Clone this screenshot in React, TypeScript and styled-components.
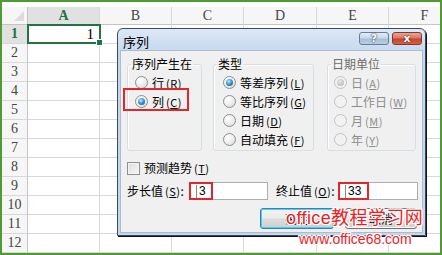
import styled, { createGlobalStyle, css } from 'styled-components';

const GlobalStyle = createGlobalStyle`
  html, body {
    margin: 0;
    padding: 0;
    background: #fff;
  }
  body {
    font-family: "Noto Sans CJK SC", "Noto Sans", sans-serif;
  }
`;

const columns = ['A', 'B', 'C', 'D', 'E', 'F'];
const rows = Array.from({ length: 12 }, (_, i) => i + 1);

const seriesIn = [
  { text: '行', key: 'R', checked: false },
  { text: '列', key: 'C', checked: true, marked: true },
];

const seriesType = [
  { text: '等差序列', key: 'L', checked: true },
  { text: '等比序列', key: 'G', checked: false },
  { text: '日期', key: 'D', checked: false },
  { text: '自动填充', key: 'F', checked: false },
];

const dateUnit = [
  { text: '日', key: 'A', checked: true },
  { text: '工作日', key: 'W', checked: false },
  { text: '月', key: 'M', checked: false },
  { text: '年', key: 'Y', checked: false },
];

type Option = { text: string; key: string; checked: boolean; marked?: boolean };

function Key({ k }: { k: string }) {
  return (
    <HotKey>
      (<u>{k}</u>)
    </HotKey>
  );
}

function OptionGroup({
  title,
  options,
  width,
  inset,
  disabled,
}: {
  title: string;
  options: Option[];
  width: number;
  inset: number;
  disabled?: boolean;
}) {
  return (
    <Group $width={width}>
      <Legend $disabled={disabled}>{title}</Legend>
      <Options $inset={inset}>
        {options.map((o) => (
          <RadioRow key={o.key} $disabled={disabled}>
            <Radio $checked={o.checked} $disabled={disabled} />
            <span>
              {o.text}
              <Key k={o.key} />
            </span>
            {o.marked && <RowMark />}
          </RadioRow>
        ))}
      </Options>
    </Group>
  );
}

function App() {
  return (
    <>
      <GlobalStyle />
      <Frame>
        <Sheet>
          <Corner>
            <Triangle />
          </Corner>
          {columns.map((c) => (
            <ColHead key={c} $selected={c === 'A'}>
              {c}
            </ColHead>
          ))}
          {rows.map((r) => (
            <Row key={r} r={r} />
          ))}
        </Sheet>

        <Dialog>
          <TitleBar>
            <Title>序列</Title>
            <TitleButtons>
              <HelpButton>?</HelpButton>
              <CloseButton>x</CloseButton>
            </TitleButtons>
          </TitleBar>
          <Body>
            <Groups>
              <OptionGroup title="序列产生在" options={seriesIn} width={75} inset={7} />
              <OptionGroup title="类型" options={seriesType} width={101} inset={9} />
              <OptionGroup title="日期单位" options={dateUnit} width={89} inset={6} disabled />
            </Groups>
            <CheckRow>
              <CheckBox />
              <span>
                预测趋势
                <Key k="T" />
              </span>
            </CheckRow>
            <FieldRow>
              <Field>
                <FieldLabel>
                  步长值
                  <Key k="S" />:
                </FieldLabel>
                <TextBox $width={79}>
                  <Caret />3<InputMark $width={24} />
                </TextBox>
              </Field>
              <Field>
                <FieldLabel>
                  终止值
                  <Key k="O" />:
                </FieldLabel>
                <TextBox $width={80}>
                  <Caret />
                  33
                  <InputMark $width={31} />
                </TextBox>
              </Field>
            </FieldRow>
            <ButtonRow>
              <Button $width={74} $primary>
                确定
              </Button>
              <Button $width={72}>取消</Button>
            </ButtonRow>
          </Body>
        </Dialog>

        <Watermark>
          <WatermarkTitle>office教程学习网</WatermarkTitle>
          <WatermarkUrl>www.office68.com</WatermarkUrl>
        </Watermark>
      </Frame>
    </>
  );
}

function Row({ r }: { r: number }) {
  return (
    <>
      <RowHead $selected={r === 1}>{r}</RowHead>
      {columns.map((c) =>
        r === 1 && c === 'A' ? (
          <ActiveCell key={c}>
            1
            <Selection>
              <FillHandle />
            </Selection>
          </ActiveCell>
        ) : (
          <Cell key={c} />
        )
      )}
    </>
  );
}

export default App;

const Frame = styled.div`
  position: relative;
  width: 442px;
  height: 255px;
  box-sizing: border-box;
  border: 2px solid #509a36;
  overflow: hidden;
  background: #fff;
`;

const Sheet = styled.div`
  display: grid;
  grid-template-columns: 26px 72px 72px 72px 73px 72px 72px;
  grid-template-rows: 18px repeat(12, 19px);
  margin-top: 5px;
  font-family: "Liberation Serif", "DejaVu Serif", serif;
  color: #444;
`;

const cellBase = css`
  box-sizing: border-box;
  border-right: 1px solid #d8d8d8;
  border-bottom: 1px solid #d8d8d8;
`;

const Corner = styled.div`
  ${cellBase}
  background: #f6f6f6;
  border-right-color: #c4c4c4;
  border-bottom-color: #c4c4c4;
  display: flex;
  align-items: flex-end;
  justify-content: flex-end;
  padding: 0 3px 3px 0;
`;

const Triangle = styled.span`
  width: 0;
  height: 0;
  border-left: 10px solid transparent;
  border-bottom: 10px solid #dcdcdc;
`;

const headBase = css<{ $selected?: boolean }>`
  ${cellBase}
  background: ${(p) => (p.$selected ? '#e1e1e1' : '#f6f6f6')};
  color: ${(p) => (p.$selected ? '#217346' : '#444')};
  font-weight: ${(p) => (p.$selected ? 700 : 400)};
  font-size: 14px;
  display: flex;
  align-items: center;
  justify-content: center;
`;

const ColHead = styled.div<{ $selected?: boolean }>`
  ${headBase}
  border-bottom-color: #c4c4c4;
`;

const RowHead = styled.div<{ $selected?: boolean }>`
  ${headBase}
  border-right-color: #c4c4c4;
`;

const Cell = styled.div`
  ${cellBase}
  background: #fff;
`;

const ActiveCell = styled.div`
  ${cellBase}
  position: relative;
  display: flex;
  align-items: center;
  justify-content: flex-end;
  padding-right: 5px;
  font-size: 15px;
  color: #000;
`;

const Selection = styled.div`
  position: absolute;
  left: -1px;
  top: -1px;
  right: -2px;
  bottom: -1px;
  border: 2px solid #217346;
`;

const FillHandle = styled.span`
  position: absolute;
  right: -4px;
  bottom: -4px;
  width: 5px;
  height: 5px;
  background: #217346;
  border: 1px solid #fff;
`;

const Dialog = styled.div`
  position: absolute;
  left: 115px;
  top: 26px;
  width: 309px;
  height: 208px;
  box-sizing: border-box;
  display: flex;
  flex-direction: column;
  border: 1px solid #3b4a5e;
  border-radius: 6px 6px 0 0;
  padding: 0 2px 2px;
  background: linear-gradient(#dce8f6, #c4d7ed 25px, #c4d7ed);
  box-shadow: 1px 1px 0 #111;
  font-family: "Noto Sans CJK SC", "Noto Sans", sans-serif;
  font-size: 12px;
  color: #000;
`;

const TitleBar = styled.div`
  height: 21px;
  flex-shrink: 0;
  display: flex;
  justify-content: space-between;
  padding: 0 1px 0 3px;
`;

const Title = styled.span`
  font-size: 13px;
  line-height: 16px;
  margin-top: 5px;
`;

const TitleButtons = styled.div`
  display: flex;
  gap: 3px;
  margin-top: 3px;
`;

const captionButton = css`
  width: 30px;
  height: 13px;
  box-sizing: border-box;
  border-radius: 3px;
  display: flex;
  align-items: center;
  justify-content: center;
  font-family: "DejaVu Sans", "Liberation Sans", sans-serif;
  font-weight: 700;
  color: #fff;
`;

const HelpButton = styled.span`
  ${captionButton}
  border: 1px solid #6a7d96;
  background: linear-gradient(#e3ecf6 0%, #c8d7e8 48%, #a9bfd8 52%, #b9cde2 100%);
  font-size: 11px;
  text-shadow: 0 0 2px #33445a, 0 0 1px #33445a;
`;

const CloseButton = styled.span`
  ${captionButton}
  border: 1px solid #8a3529;
  background: linear-gradient(#eaa497 0%, #d97766 48%, #c43f2c 52%, #d4624c 100%);
  font-size: 11px;
  line-height: 11px;
  text-shadow: 0 0 2px #5b1a10, 0 0 1px #5b1a10;
`;

const Body = styled.div`
  flex: 1;
  display: flex;
  flex-direction: column;
  background: #f0f0f0;
  border: 1px solid #a9bbd1;
  padding: 6px 3px 0 6px;
`;

const Groups = styled.div`
  display: flex;
  gap: 11px;
  & > :last-child {
    margin-left: 2px;
  }
`;

const Group = styled.fieldset<{ $width: number }>`
  margin: 0;
  width: ${(p) => p.$width}px;
  box-sizing: border-box;
  min-width: 0;
  height: 94px;
  padding: 2px 0 0 0;
  border: 1px solid #d5dfe5;
  border-radius: 3px;
  box-shadow: inset 1px 1px 0 #fff;
`;

const Legend = styled.legend<{ $disabled?: boolean }>`
  padding: 0 1px;
  margin-left: 3px;
  line-height: 14px;
  white-space: nowrap;
  color: ${(p) => (p.$disabled ? '#6d6d6d' : '#000')};
`;

const Options = styled.div<{ $inset: number }>`
  padding-left: ${(p) => p.$inset}px;
`;

const RadioRow = styled.div<{ $disabled?: boolean }>`
  position: relative;
  height: 19px;
  display: flex;
  align-items: center;
  gap: 4px;
  line-height: 14px;
  white-space: nowrap;
  color: ${(p) => (p.$disabled ? '#8d8d8d' : '#000')};
`;

const RowMark = styled.span`
  position: absolute;
  left: -12px;
  top: -4px;
  width: 66px;
  height: 23px;
  box-sizing: border-box;
  border: 2px solid #e2262a;
`;

const Radio = styled.span<{ $checked?: boolean; $disabled?: boolean }>`
  flex-shrink: 0;
  width: 13px;
  height: 13px;
  box-sizing: border-box;
  border-radius: 50%;
  border: 1px solid ${(p) => (p.$disabled ? '#c2c2c2' : '#8c8f91')};
  background: ${(p) =>
    p.$disabled
      ? '#f2f2f2'
      : 'radial-gradient(circle at 35% 30%, #ffffff 0%, #ececec 55%, #cfd1d3 100%)'};
  display: flex;
  align-items: center;
  justify-content: center;
  &::after {
    content: '';
    display: ${(p) => (p.$checked ? 'block' : 'none')};
    width: 7px;
    height: 7px;
    border-radius: 50%;
    background: ${(p) =>
      p.$disabled
        ? 'radial-gradient(circle at 40% 35%, #e4e4e4 0%, #b4b4b4 100%)'
        : 'radial-gradient(circle at 40% 35%, #c7ecff 0%, #3f95d6 45%, #0b4a8a 100%)'};
  }
`;

const HotKey = styled.span`
  font-size: 11px;
  margin-left: 2px;
  letter-spacing: 0.5px;
  u {
    text-underline-offset: 1px;
  }
`;

const CheckRow = styled.div`
  display: flex;
  align-items: center;
  gap: 4px;
  height: 18px;
  margin-top: 8px;
  line-height: 14px;
`;

const CheckBox = styled.span`
  width: 13px;
  height: 13px;
  box-sizing: border-box;
  border: 1px solid #8e8f8f;
  background: linear-gradient(135deg, #dcdcdc, #f8f8f8);
  box-shadow: inset 0 0 0 1px #f4f4f4;
`;

const FieldRow = styled.div`
  display: flex;
  gap: 8px;
  margin-top: 5px;
  height: 18px;
`;

const Field = styled.div`
  display: flex;
  align-items: center;
`;

const FieldLabel = styled.span`
  width: 62px;
  white-space: nowrap;
  line-height: 14px;
`;

const TextBox = styled.div<{ $width: number }>`
  position: relative;
  width: ${(p) => p.$width}px;
  height: 18px;
  box-sizing: border-box;
  border: 1px solid #abadb3;
  background: #fff;
  display: flex;
  align-items: center;
  padding-left: 6px;
  font-family: "Liberation Sans", Arial, sans-serif;
  font-size: 12px;
`;

const Caret = styled.span`
  width: 1px;
  height: 13px;
  background: #8a8a8a;
  margin-right: 2px;
`;

const InputMark = styled.span<{ $width: number }>`
  position: absolute;
  left: -1px;
  top: -1px;
  bottom: -1px;
  width: ${(p) => p.$width}px;
  box-sizing: border-box;
  border: 2px solid #e2262a;
`;

const ButtonRow = styled.div`
  display: flex;
  justify-content: flex-end;
  gap: 11px;
  margin-top: 8px;
  padding-right: 2px;
`;

const Button = styled.div<{ $width: number; $primary?: boolean }>`
  width: ${(p) => p.$width}px;
  height: 21px;
  box-sizing: border-box;
  border-radius: 3px;
  border: 1px solid ${(p) => (p.$primary ? '#3c7fb1' : '#707070')};
  background: linear-gradient(#f2f2f2 0%, #ebebeb 48%, #dddddd 52%, #cfcfcf 100%);
  box-shadow: ${(p) => (p.$primary ? 'inset 0 0 0 1px #48d0fc' : 'inset 0 0 0 1px #fcfcfc')};
  display: flex;
  align-items: center;
  justify-content: center;
  line-height: 14px;
`;

const Watermark = styled.div`
  position: absolute;
  left: 284px;
  top: 205px;
  display: flex;
  flex-direction: column;
  color: #ec1c24;
  text-shadow: 1px 0 0 #fff, -1px 0 0 #fff, 0 1px 0 #fff, 0 -1px 0 #fff, 1px 1px 0 #fff,
    -1px -1px 0 #fff, 1px -1px 0 #fff, -1px 1px 0 #fff;
  white-space: nowrap;
`;

const WatermarkTitle = styled.span`
  font-family: "Liberation Sans", "Noto Sans CJK SC", sans-serif;
  font-size: 18px;
  line-height: 22px;
  letter-spacing: 0.4px;
`;

const WatermarkUrl = styled.span`
  font-family: "Liberation Sans", Arial, sans-serif;
  font-size: 14px;
  line-height: 16px;
  margin-left: 13px;
  margin-top: 2px;
`;
